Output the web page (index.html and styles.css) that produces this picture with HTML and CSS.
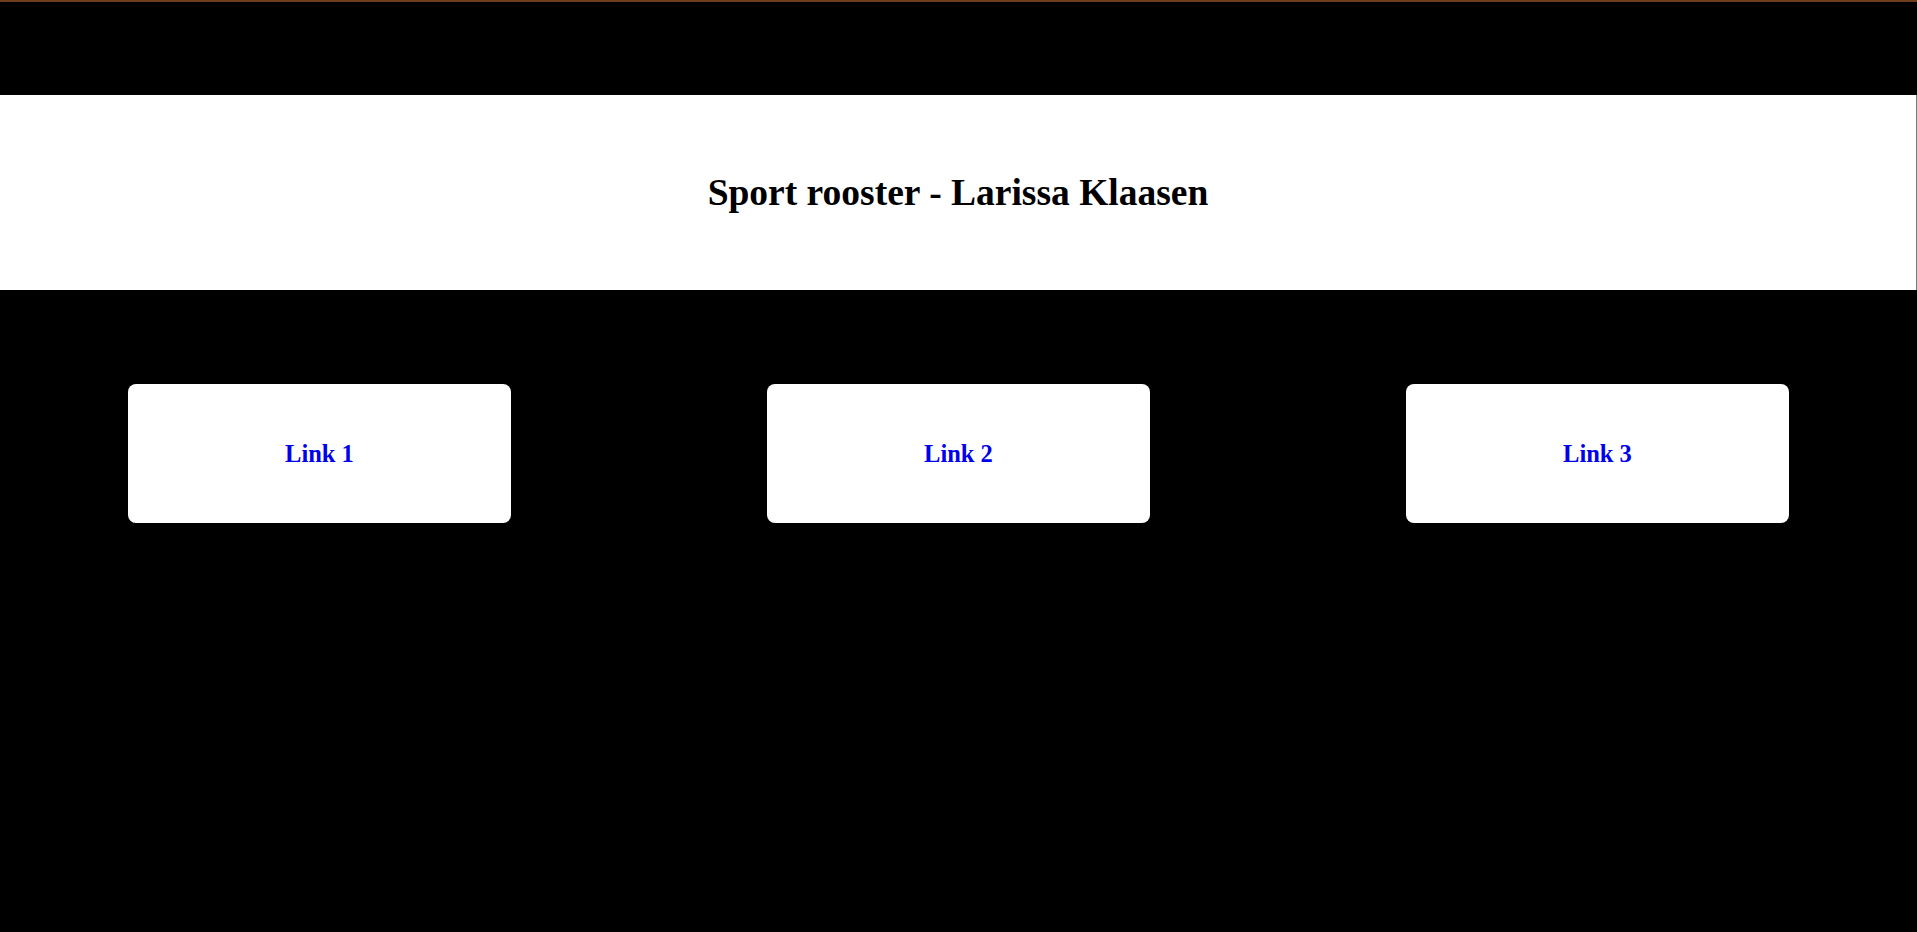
FILE: index.html
```html
<!DOCTYPE html>
<html lang="nl">
<head>
<meta charset="utf-8">
<title>Sport rooster - Larissa Klaasen</title>
<link rel="stylesheet" href="styles.css">
</head>
<body>
<div class="topbar"></div>
<header class="header">
  <h1 class="title">Sport rooster - Larissa Klaasen</h1>
</header>
<main class="links">
  <div class="cell"><a class="card" href="#">Link 1</a></div>
  <div class="cell"><a class="card" href="#">Link 2</a></div>
  <div class="cell"><a class="card" href="#">Link 3</a></div>
</main>
</body>
</html>
```
FILE: styles.css
```css
html, body {
  margin: 0;
  padding: 0;
  height: 100%;
}
body {
  background: #000;
  border-top: 2px solid #6f3f1c;
  box-sizing: border-box;
  font-family: "Liberation Serif", "Times New Roman", serif;
}
.topbar {
  height: 93px;
}
.header {
  height: 195px;
  background: #fff;
  display: flex;
  align-items: center;
  justify-content: center;
  border-right: 1px solid #7a7a7a;
}
.title {
  margin: 0;
  font-size: 37.5px;
  font-weight: bold;
  color: #000;
}
.links {
  display: grid;
  grid-template-columns: repeat(3, 1fr);
  padding-top: 94px;
}
.cell {
  display: flex;
  justify-content: center;
}
.card {
  width: 60%;
  height: 139px;
  background: #fff;
  border-radius: 8px;
  display: flex;
  align-items: center;
  justify-content: center;
  color: #0000ee;
  font-weight: bold;
  font-size: 24.5px;
  text-decoration: none;
}
```
